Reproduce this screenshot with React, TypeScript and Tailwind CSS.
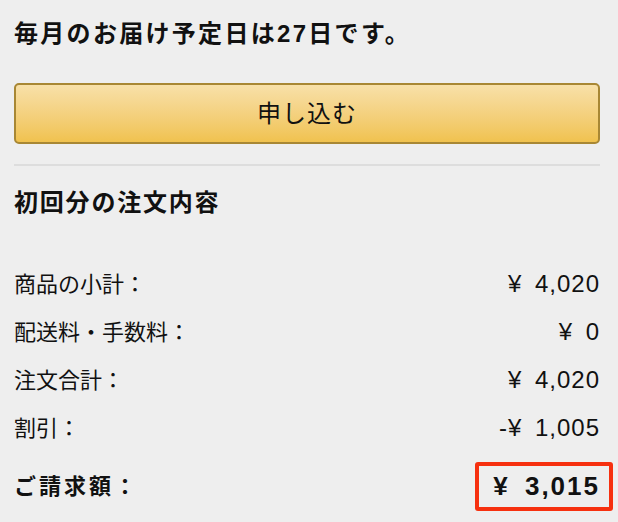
const rows = [
  { label: "商品の小計：", value: "¥ 4,020" },
  { label: "配送料・手数料：", value: "¥ 0" },
  { label: "注文合計：", value: "¥ 4,020" },
  { label: "割引：", value: "-¥ 1,005" },
];

export default function App() {
  return (
    <div
      className="min-h-[522px] w-[618px] bg-[#eeeeee] pl-[14px] pr-[18px] pt-[20px] text-[#111111]"
      style={{ fontFamily: '"Liberation Sans", "Noto Sans CJK JP", sans-serif' }}
    >
      {/* delivery note */}
      <div className="text-[24px] font-bold leading-[28px] tracking-[2.3px]">
        毎月のお届け予定日は27日です。
      </div>

      <button className="mt-[35px] flex h-[61px] w-full items-center justify-center rounded-[5px] border-2 border-[#a88734] bg-gradient-to-b from-[#f8e0a8] to-[#f0c24e] text-[24px] tracking-[1px] text-[#111111]">
        申し込む
      </button>

      <div className="mt-[20px] h-[2px] w-full bg-[#dddddd]" />

      {/* order summary */}
      <div className="mt-[23px] text-[24px] font-bold leading-[28px] tracking-[1.8px]">
        初回分の注文内容
      </div>

      <div className="mt-[43px] flex flex-col">
        {rows.map((row) => (
          <div key={row.label} className="flex h-[48px] items-center justify-between text-[22px]">
            <span>{row.label}</span>
            <span className="whitespace-pre text-[24px] tracking-[1px] [word-spacing:5px]">{row.value}</span>
          </div>
        ))}
      </div>

      <div className="mt-[10px] flex items-center justify-between">
        <span className="text-[22px] font-bold tracking-[3px]">ご請求額：</span>
        <span className="-mr-[13px] flex h-[49px] items-center whitespace-pre rounded-[3px] border-4 border-[#f6300f] pl-[14px] pr-[9px] text-[26px] font-bold tracking-[2px] [word-spacing:6px]">
          ¥ 3,015
        </span>
      </div>
    </div>
  );
}
